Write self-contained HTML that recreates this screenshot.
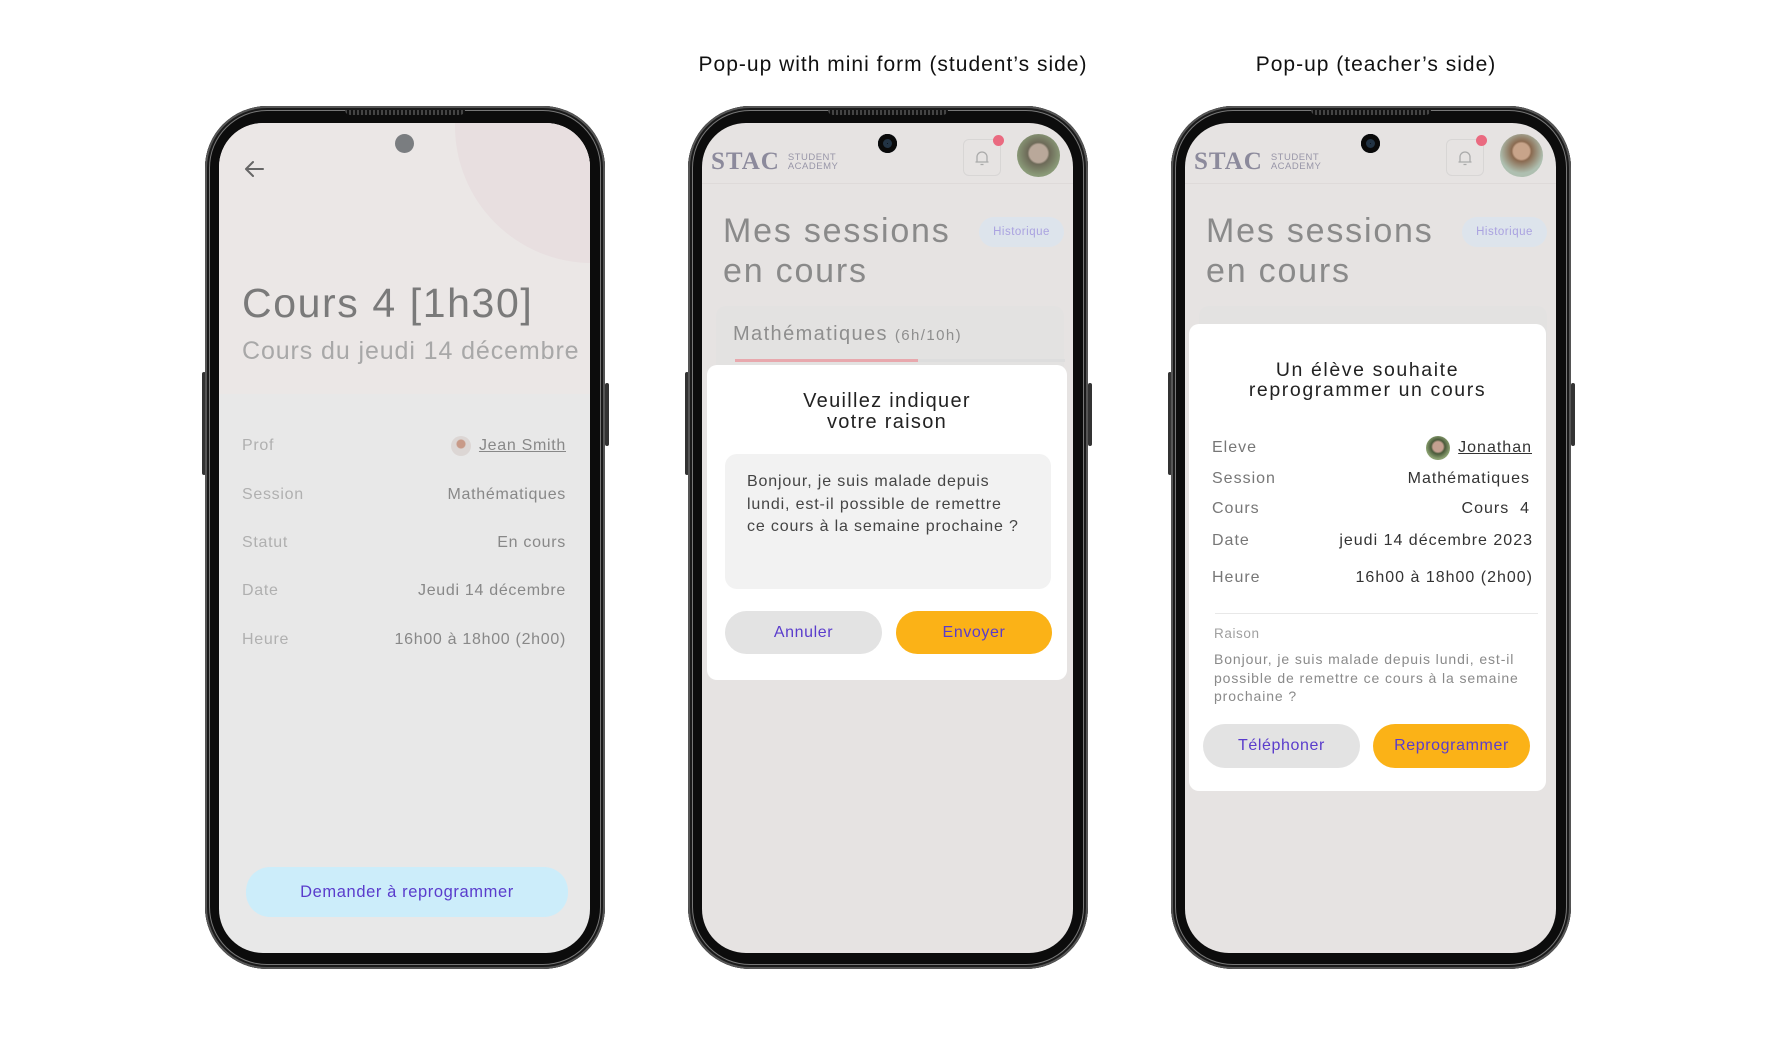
<!DOCTYPE html>
<html><head><meta charset="utf-8"><style>
*{margin:0;padding:0;box-sizing:border-box}
body{width:1784px;height:1058px;background:#fff;position:relative;overflow:hidden;font-family:"Liberation Sans",sans-serif}
.lbl{position:absolute;top:53px;font-size:21px;color:#111;letter-spacing:1px;white-space:nowrap;transform:translateX(-50%)}
.phone{position:absolute;top:106px;width:400px;height:863px;border-radius:62px;background:#0c0c0c;box-shadow:inset 0 0 0 2px #555,inset 0 0 0 4px #1a1a1a,inset 0 0 0 5px #777}
.sb{position:absolute;background:#333;width:4px;border-radius:2px}
.spk{position:absolute;left:140px;top:4px;width:120px;height:5px;border-radius:0 0 6px 6px;background:repeating-linear-gradient(90deg,#444 0 2px,#111 2px 4px)}
.scr{position:absolute;left:14px;top:17px;width:371px;height:830px;border-radius:44px;overflow:hidden;background:#e6e3e2}
.cam{position:absolute;left:176px;top:11px;width:19px;height:19px;border-radius:50%}
.a{position:absolute;white-space:nowrap}
.row{position:absolute;left:23px;right:26px;display:flex;justify-content:space-between;align-items:center;font-size:16px;letter-spacing:0.7px;height:22px}
.btn{position:absolute;border-radius:24px;display:flex;align-items:center;justify-content:center;font-size:16px;color:#5a3ccc;letter-spacing:0.6px}
.logo{position:absolute;left:9px;top:25px;display:flex;align-items:center;gap:8px}
.logo b{font-family:"Liberation Serif",serif;font-weight:bold;font-size:25px;color:#8c8a9c;letter-spacing:1px}
.logo span{font-size:9.5px;line-height:9px;color:#9896a8;letter-spacing:0.5px}
</style></head><body>

<div class="lbl" style="left:893px">Pop-up with mini form (student’s side)</div>
<div class="lbl" style="left:1376px">Pop-up (teacher’s side)</div>

<!-- Phone 1 -->
<div class="sb" style="left:202px;top:372px;height:103px"></div>
<div class="sb" style="left:605px;top:383px;height:63px"></div>
<div class="phone" style="left:205px">
<div class="spk"></div>
<div class="scr" style="background:#e8e8e8">
 <div class="a" style="left:0;top:0;width:371px;height:271px;background:#ebe7e6"></div>
 <div class="a" style="left:236px;top:-134px;width:274px;height:274px;border-radius:50%;background:#e8dfe0"></div>
 <div class="cam" style="background:#7a7d80"></div>
 <svg class="a" style="left:24px;top:36px" width="22" height="20" viewBox="0 0 22 20"><path d="M20 10H3M10 3L3 10L10 17" stroke="#666" stroke-width="2" fill="none" stroke-linecap="round" stroke-linejoin="round"/></svg>
 <div class="a" style="left:23px;top:157px;font-size:41px;color:#7a7a7a;letter-spacing:1.6px">Cours 4 [1h30]</div>
 <div class="a" style="left:23px;top:214px;font-size:25px;color:#a8a8a8;letter-spacing:0.9px">Cours du jeudi 14 décembre</div>
 <div class="row" style="top:312px;color:#b0b0b0;right:24px"><span>Prof</span><span style="color:#888;display:flex;align-items:center;gap:8px"><i style="display:inline-block;width:20px;height:20px;border-radius:50%;background:radial-gradient(circle at 50% 40%,#c89a88 0 4px,#dcd6d4 5px)"></i><u>Jean Smith</u></span></div>
 <div class="row" style="top:361px;color:#b0b0b0;right:24px"><span>Session</span><span style="color:#888">Mathématiques</span></div>
 <div class="row" style="top:409px;color:#b0b0b0;right:24px"><span>Statut</span><span style="color:#888">En cours</span></div>
 <div class="row" style="top:457px;color:#b0b0b0;right:24px"><span>Date</span><span style="color:#888">Jeudi 14 décembre</span></div>
 <div class="row" style="top:506px;color:#b0b0b0;right:24px"><span>Heure</span><span style="color:#888">16h00 à 18h00 (2h00)</span></div>
 <div class="btn" style="left:27px;top:744px;width:322px;height:50px;background:#ccedfa;font-size:16.5px">Demander à reprogrammer</div>
</div></div>

<!-- Phone 2 -->
<div class="sb" style="left:685px;top:372px;height:103px"></div>
<div class="sb" style="left:1088px;top:383px;height:63px"></div>
<div class="phone" style="left:688px">
<div class="spk"></div>
<div class="scr">
 <div class="cam" style="background:#050a10;box-shadow:inset 0 0 0 5px #0a0a0a,inset 0 0 0 9px #234"></div>
 <div class="logo"><b>STAC</b><span>STUDENT<br>ACADEMY</span></div>
 <div class="a" style="left:261px;top:16px;width:38px;height:37px;border:1px solid #d8d6d5;border-radius:6px"></div>
 <svg class="a" style="left:271px;top:26px" width="18" height="18" viewBox="0 0 18 18"><path d="M4 13V8a5 5 0 0 1 10 0v5M2.5 13h13M7.5 15.5h3" stroke="#aaa" stroke-width="1.3" fill="none"/></svg>
 <div class="a" style="left:291px;top:12px;width:11px;height:11px;border-radius:50%;background:#ea6a80"></div>
 <div class="a" style="left:315px;top:11px;width:43px;height:43px;border-radius:50%;background:radial-gradient(circle at 50% 45%,#b9a89a 0 9px,#6d6a58 11px,#8a9a78 22px)"></div>
 <div class="a" style="left:0;top:60px;width:371px;height:1px;background:#dedad9"></div>
 <div class="a" style="left:21px;top:88px;font-size:34px;line-height:40px;color:#8a8a8a;letter-spacing:1.8px">Mes sessions<br>en cours</div>
 <div class="a" style="left:277px;top:94px;width:85px;height:30px;border-radius:15px;background:#dde4ec;color:#aaa2e0;font-size:11.5px;display:flex;align-items:center;justify-content:center;letter-spacing:0.5px">Historique</div>
 <div class="a" style="left:14px;top:183px;width:348px;height:70px;border-radius:10px;background:#e3e2e1"></div>
 <div class="a" style="left:31px;top:200px;font-size:20px;color:#8e8e8e;letter-spacing:1.4px">Mathématiques <span style="font-size:15px">(6h/10h)</span></div>
 <div class="a" style="left:33px;top:236px;width:330px;height:3px;background:#ddd"></div>
 <div class="a" style="left:33px;top:236px;width:183px;height:3px;background:#e8a8ad"></div>
 <div class="a" style="left:5px;top:242px;width:360px;height:315px;border-radius:10px;background:#fff"></div>
 <div class="a" style="left:5px;width:360px;top:268px;text-align:center;font-size:20px;line-height:21px;color:#222;letter-spacing:1.3px">Veuillez indiquer<br>votre raison</div>
 <div class="a" style="left:23px;top:331px;width:326px;height:135px;border-radius:12px;background:#f2f2f2"></div>
 <div class="a" style="left:45px;top:348px;font-size:16px;line-height:22.5px;color:#444;letter-spacing:0.85px">Bonjour, je suis malade depuis<br>lundi, est-il possible de remettre<br>ce cours à la semaine prochaine ?</div>
 <div class="btn" style="left:23px;top:488px;width:157px;height:43px;background:#e3e3e3">Annuler</div>
 <div class="btn" style="left:194px;top:488px;width:156px;height:43px;background:#fbb217">Envoyer</div>
</div></div>

<!-- Phone 3 -->
<div class="sb" style="left:1168px;top:372px;height:103px"></div>
<div class="sb" style="left:1571px;top:383px;height:63px"></div>
<div class="phone" style="left:1171px">
<div class="spk"></div>
<div class="scr">
 <div class="cam" style="background:#050a10;box-shadow:inset 0 0 0 5px #0a0a0a,inset 0 0 0 9px #234"></div>
 <div class="logo"><b>STAC</b><span>STUDENT<br>ACADEMY</span></div>
 <div class="a" style="left:261px;top:16px;width:38px;height:37px;border:1px solid #d8d6d5;border-radius:6px"></div>
 <svg class="a" style="left:271px;top:26px" width="18" height="18" viewBox="0 0 18 18"><path d="M4 13V8a5 5 0 0 1 10 0v5M2.5 13h13M7.5 15.5h3" stroke="#aaa" stroke-width="1.3" fill="none"/></svg>
 <div class="a" style="left:291px;top:12px;width:11px;height:11px;border-radius:50%;background:#ea6a80"></div>
 <div class="a" style="left:315px;top:11px;width:43px;height:43px;border-radius:50%;background:radial-gradient(circle at 50% 40%,#c8a48a 0 8px,#8a6a50 10px,#aebfb0 22px)"></div>
 <div class="a" style="left:0;top:60px;width:371px;height:1px;background:#dedad9"></div>
 <div class="a" style="left:21px;top:88px;font-size:34px;line-height:40px;color:#8a8a8a;letter-spacing:1.8px">Mes sessions<br>en cours</div>
 <div class="a" style="left:277px;top:94px;width:85px;height:30px;border-radius:15px;background:#dde4ec;color:#aaa2e0;font-size:11.5px;display:flex;align-items:center;justify-content:center;letter-spacing:0.5px">Historique</div>
 <div class="a" style="left:14px;top:183px;width:348px;height:70px;border-radius:10px;background:#e3e2e1"></div>
 <div class="a" style="left:4px;top:201px;width:357px;height:467px;border-radius:10px;background:#fff"></div>
 <div class="a" style="left:4px;width:357px;top:237px;text-align:center;font-size:19.5px;line-height:20px;color:#222;letter-spacing:1.6px">Un élève souhaite<br>reprogrammer un cours</div>
 <div class="row" style="top:314px;left:27px;right:24px;color:#777;letter-spacing:1px"><span>Eleve</span><span style="color:#333;display:flex;align-items:center;gap:8px"><i style="display:inline-block;width:24px;height:24px;border-radius:50%;background:radial-gradient(circle at 50% 45%,#c4a090 0 5px,#4a5a3a 7px,#8aa070 12px)"></i><u>Jonathan</u></span></div>
 <div class="row" style="top:345px;left:27px;right:26px;color:#777;letter-spacing:1px"><span>Session</span><span style="color:#333">Mathématiques</span></div>
 <div class="row" style="top:375px;left:27px;right:26px;color:#777;letter-spacing:1px"><span>Cours</span><span style="color:#333">Cours&nbsp; 4</span></div>
 <div class="row" style="top:407px;left:27px;right:23px;color:#777;letter-spacing:1px"><span>Date</span><span style="color:#333">jeudi 14 décembre 2023</span></div>
 <div class="row" style="top:444px;left:27px;right:23px;color:#777;letter-spacing:1px"><span>Heure</span><span style="color:#333">16h00 à 18h00 (2h00)</span></div>
 <div class="a" style="left:30px;top:490px;width:323px;height:1px;background:#e8e8e8"></div>
 <div class="a" style="left:29px;top:503px;font-size:13.5px;color:#a0a0a0;letter-spacing:0.6px">Raison</div>
 <div class="a" style="left:29px;top:527px;font-size:14px;line-height:18.5px;color:#8a8a8a;letter-spacing:0.9px">Bonjour, je suis malade depuis lundi, est-il<br>possible de remettre ce cours à la semaine<br>prochaine ?</div>
 <div class="btn" style="left:18px;top:601px;width:157px;height:44px;background:#e3e3e3">Téléphoner</div>
 <div class="btn" style="left:188px;top:601px;width:157px;height:44px;background:#fbb217">Reprogrammer</div>
</div></div>

</body></html>
